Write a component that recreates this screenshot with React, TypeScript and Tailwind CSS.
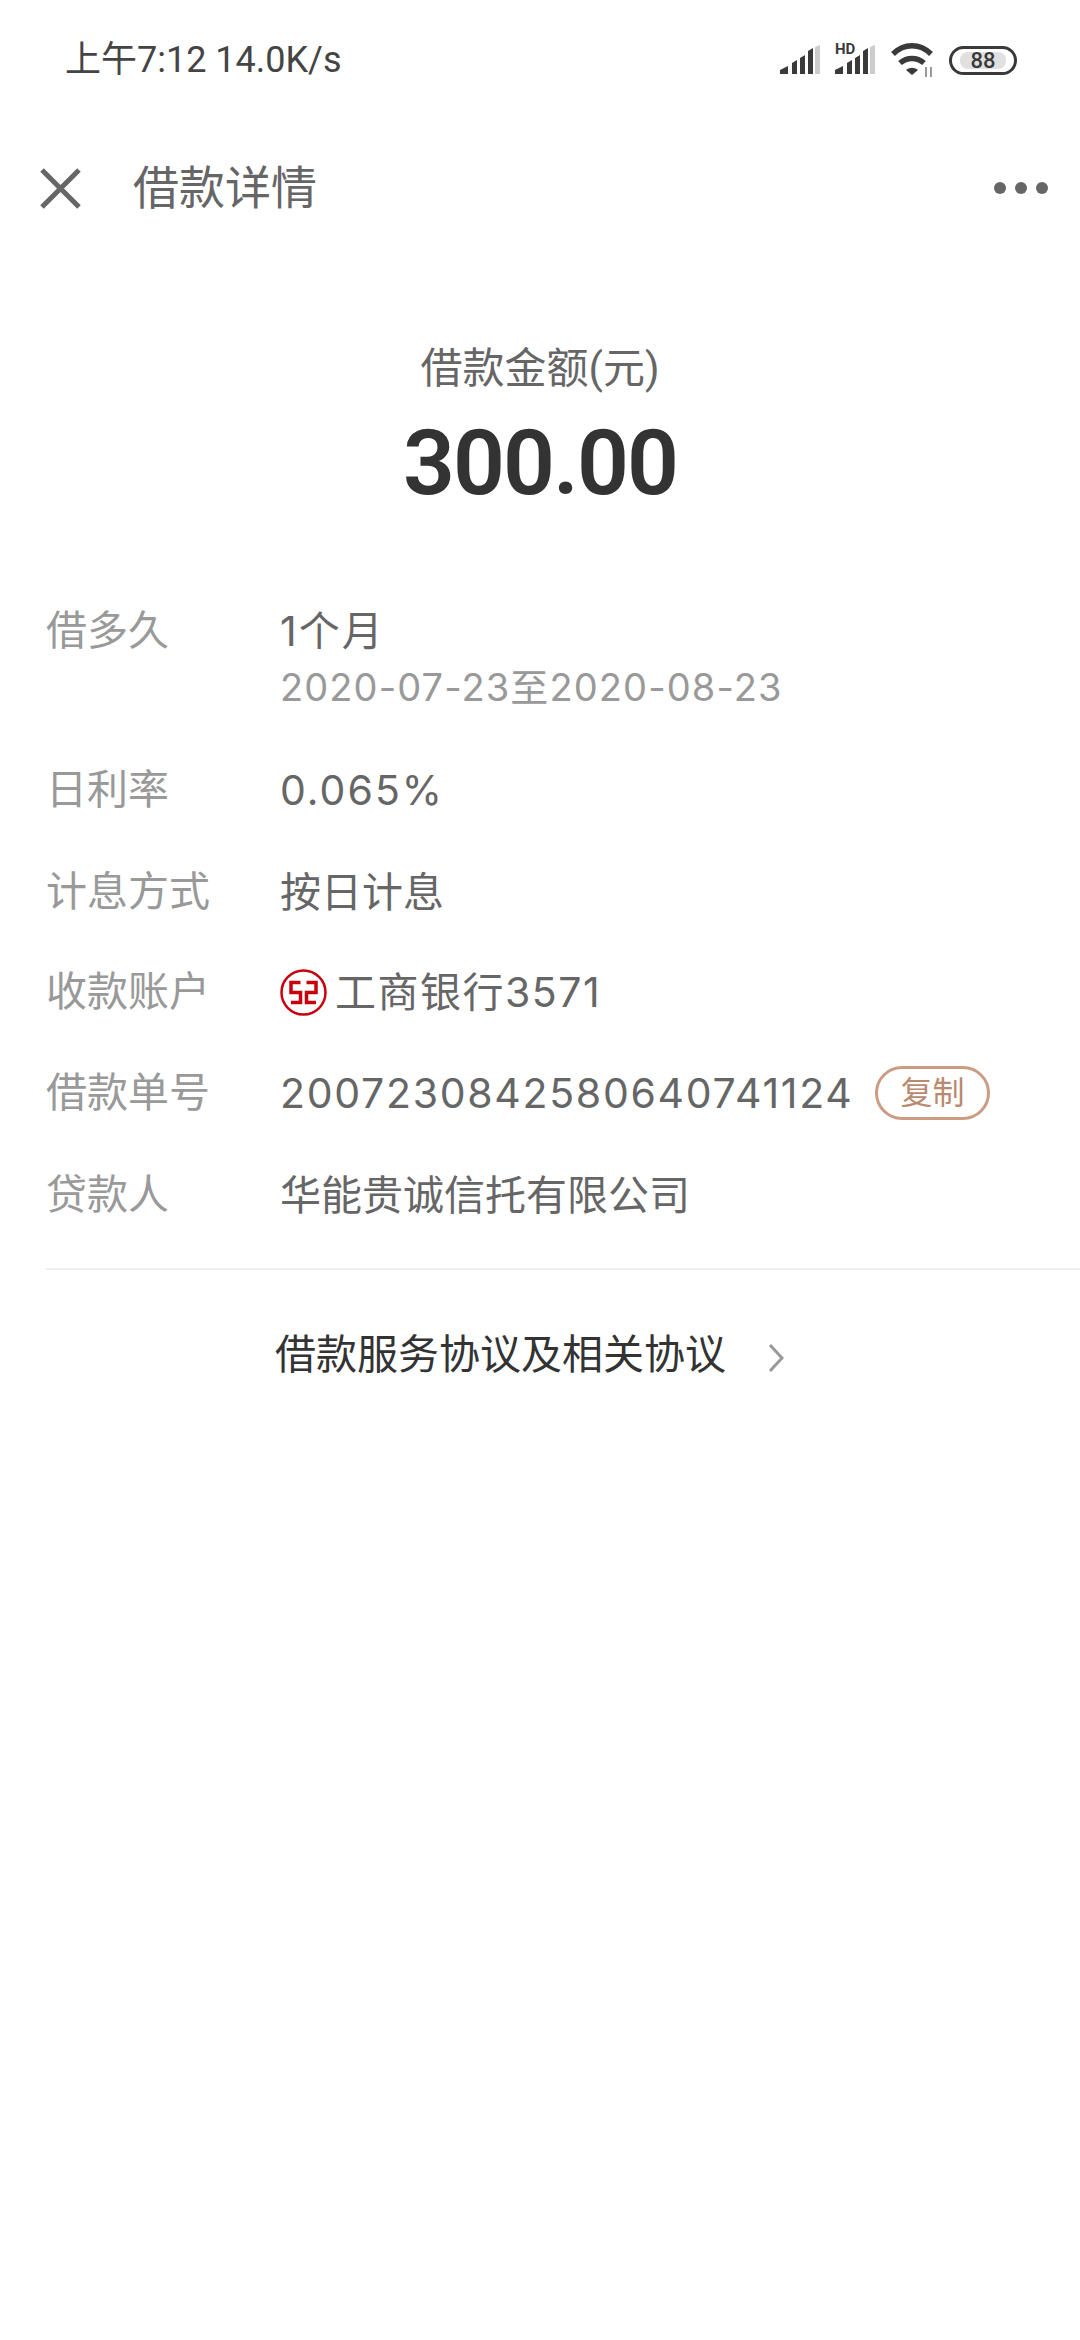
const CJK = "font-['Roboto','Noto_Sans_CJK_SC',sans-serif]";

function SignalBars() {
  return (
    <svg className="absolute left-0 top-0" width="40" height="30" viewBox="0 0 40 30">
      <path d="M0 29v-4l8-4v8z" fill="#3a3a3a" />
      <path d="M12 29V18l5-3v14zM20 29V13l5-3v19zM28 29V6l5-3v26z" fill="#3a3a3a" />
      <path d="M35 29V2l5-2v29z" fill="#cccccc" />
    </svg>
  );
}

function Row({ label, className, children }: { label: string; className: string; children: React.ReactNode }) {
  return (
    <div className={`flex items-start ${className}`}>
      <div className="w-[234px] shrink-0 text-[41px] leading-[56px] text-[#999999]">{label}</div>
      <div className="min-w-0 flex-1 font-['Inter','Noto_Sans_CJK_SC',sans-serif] text-[41px] leading-[56px] text-[#666666]">{children}</div>
    </div>
  );
}

export default function App() {
  return (
    <div className={`h-[2340px] w-[1080px] overflow-hidden bg-white ${CJK}`}>
      <div className="flex h-[120px] items-center justify-between pl-[65px] pr-[63px]">
        <span className="text-[36px] text-[#444444]">上午7:12 14.0K/s</span>
        <div className="flex items-center">
          <div className="relative h-[30px] w-[40px]">
            <SignalBars />
          </div>
          <div className="relative ml-[15px] h-[30px] w-[40px]">
            <span className="absolute left-0 top-[-3px] text-[15px] font-bold leading-[14px] text-[#3a3a3a]">HD</span>
            <SignalBars />
          </div>
          <svg className="ml-[16px]" width="46" height="34" viewBox="0 0 46 34" fill="none" stroke="#3a3a3a" strokeWidth="5.5">
            <path d="M2 11c11-11 27-11 38 0" />
            <path d="M9 20c7-6 17-6 24 0" />
            <path d="M21 32l-6-5c4-3 8-3 12 0z" fill="#3a3a3a" stroke="none" />
            <path d="M35 34V24M40 34V24" stroke="#999999" strokeWidth="2" />
          </svg>
          <div className="ml-[12px] flex h-[29px] w-[68px] items-center rounded-full border-[3px] border-[#3a3a3a] px-[8px]">
            <div className="flex h-[17px] w-full items-center justify-center rounded-[8px] bg-[#e0e0e0] text-[22px] font-medium text-[#3a3a3a]">88</div>
          </div>
        </div>
      </div>
      <div className="flex h-[130px] items-center justify-between pl-[40px] pr-[32px] pt-[6px]">
        <div className="flex items-center gap-[52px]">
          <svg width="41" height="41" viewBox="0 0 41 41" stroke="#666666" strokeWidth="5"><path d="M2 2l37 37M39 2L2 39" /></svg>
          <span className="text-[46px] text-[#666666]">借款详情</span>
        </div>
        <div className="flex gap-[9px]">
          <span className="h-[12px] w-[12px] rounded-full bg-[#666666]" />
          <span className="h-[12px] w-[12px] rounded-full bg-[#666666]" />
          <span className="h-[12px] w-[12px] rounded-full bg-[#666666]" />
        </div>
      </div>
      <div className="mt-[91px] text-center text-[42px] leading-[56px] text-[#666666]">借款金额(元)</div>
      <div className="mt-[16px] text-center text-[91px] font-semibold leading-[100px] tracking-[-2px] text-[#333333]">300.00</div>
      <div className="mt-[90px] pl-[46px]">
        <Row label="借多久" className="">
          <div className="tracking-[2px]">1个月</div>
          <div className="text-[38px] tracking-[1.1px] text-[#999999]">2020-07-23至2020-08-23</div>
        </Row>
        <Row label="日利率" className="mt-[47px]"><span className="tracking-[2px]">0.065%</span></Row>
        <Row label="计息方式" className="mt-[46px]">按日计息</Row>
        <Row label="收款账户" className="mt-[44px]">
          <div className="flex items-center gap-[8px]">
            <svg width="47" height="47" viewBox="0 0 47 47" fill="none">
              <circle cx="23.5" cy="23.5" r="22" stroke="#c7000b" strokeWidth="2.5" />
              <path d="M20.5 13.5H11V23.5H20.5V33.5H11M26.5 13.5H36V23.5H26.5V33.5H36" stroke="#c7000b" strokeWidth="3.5" />
            </svg>
            <span className="tracking-[1.5px]">工商银行3571</span>
          </div>
        </Row>
        <Row label="借款单号" className="mt-[45px]">
          <div className="flex items-center">
            <div className="w-[571px] overflow-hidden whitespace-nowrap tracking-[1.7px]">2007230842580640741124</div>
            <div className="ml-[24px] flex h-[54px] w-[115px] items-center justify-center rounded-full border-[3px] border-[#cb9c82] text-[32px] text-[#b98a70]">复制</div>
          </div>
        </Row>
        <Row label="贷款人" className="mt-[46px]">华能贵诚信托有限公司</Row>
        <div className="mt-[45px] h-[2px] bg-[#eeeeee]" />
      </div>
      <div className="mt-[58px] flex h-[56px] items-center pl-[275px]">
        <span className="text-[41px] text-[#333333]">借款服务协议及相关协议</span>
        <svg className="ml-[42px] mt-[4px]" width="16" height="30" viewBox="0 0 16 30" fill="none" stroke="#999999" strokeWidth="3"><path d="M2 2l12 13L2 28" /></svg>
      </div>
    </div>
  );
}
